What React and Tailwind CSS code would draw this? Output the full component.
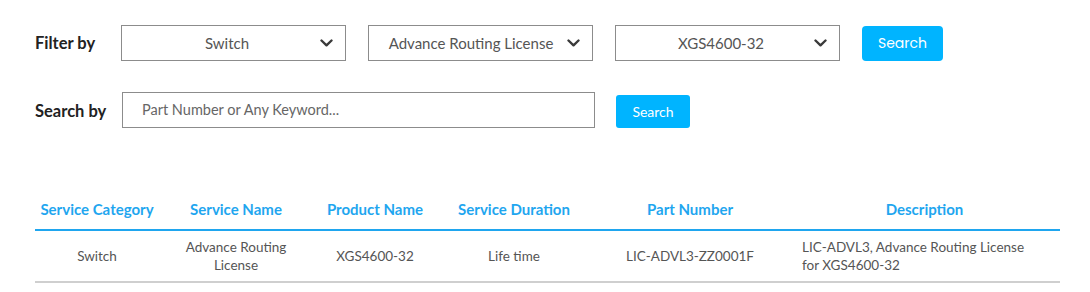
import React from 'react'

function Chevron() {
    return (
        <svg width="13" height="8" viewBox="0 0 13 8" className="shrink-0">
            <path d="M1.5 1.5 L6.5 6.3 L11.5 1.5" fill="none" stroke="#3a3a3a" strokeWidth="2.4" strokeLinecap="round" strokeLinejoin="round" />
        </svg>
    )
}

function Select({ value, padRight }) {
    return (
        <div className="w-[225px] h-[36px] border border-[#8c8c8c] flex items-center bg-white">
            <span className={`flex-1 text-center text-[15px] text-[#555] ${padRight}`}>{value}</span>
            <span className="pr-[12px]"><Chevron /></span>
        </div>
    )
}

const headers = [
    ['Service Category', 'w-[124px]'],
    ['Service Name', 'w-[154px]'],
    ['Product Name', 'w-[124px]'],
    ['Service Duration', 'w-[154px]'],
    ['Part Number', 'w-[198px]'],
    ['Description', 'w-[271px]'],
]

export default function App() {
    return (
        <div className="w-[1090px] h-[292px] bg-white text-[#333] font-['Lato',sans-serif] overflow-hidden">
            <div className="pt-[25px] pl-[35px]">
                <div className="flex items-center">
                    <span className="w-[86px] text-[16.5px] font-bold text-[#222]">Filter by</span>
                    <div className="flex items-center gap-[22px]">
                        <Select value="Switch" padRight="pl-[12px]" />
                        <Select value="Advance Routing License" padRight="pl-[6px]" />
                        <Select value="XGS4600-32" padRight="pl-[12px]" />
                        <button className="w-[81px] h-[35px] rounded-[4px] bg-[#00b4ff] text-white text-[14px] font-['Poppins','Lato',sans-serif]">Search</button>
                    </div>
                </div>
                <div className="flex items-center mt-[31px]">
                    <span className="w-[87px] pt-[3px] text-[16.5px] font-bold text-[#222]">Search by</span>
                    <div className="w-[473px] h-[36px] border border-[#8c8c8c] flex items-center pl-[19px] text-[14.5px] text-[#666]">
                        Part Number or Any Keyword...
                    </div>
                    <button className="ml-[21px] mt-[3px] w-[74px] h-[33px] rounded-[3px] bg-[#00b4ff] text-white text-[14px]">Search</button>
                </div>
            </div>
            <table className="ml-[35px] mt-[65px] border-collapse w-[1025px] table-fixed">
                <thead>
                    <tr className="border-b-2 border-[#1fa6ef]">
                        {headers.map(([h, w]) => (
                            <th key={h} className={`${w} h-[37px] pb-[4px] text-[15px] font-bold text-[#1fa6ef] text-center`}>{h}</th>
                        ))}
                    </tr>
                </thead>
                <tbody>
                    <tr className="border-b-2 border-[#cfcfcf] text-[13.5px] text-[#555] leading-[18px]">
                        <td className="h-[52px] text-center">Switch</td>
                        <td className="text-center px-[20px]">Advance Routing License</td>
                        <td className="text-center">XGS4600-32</td>
                        <td className="text-center">Life time</td>
                        <td className="text-center">LIC-ADVL3-ZZ0001F</td>
                        <td className="pl-[13px] pr-[30px]">LIC-ADVL3, Advance Routing License for XGS4600-32</td>
                    </tr>
                </tbody>
            </table>
        </div>
    )
}
